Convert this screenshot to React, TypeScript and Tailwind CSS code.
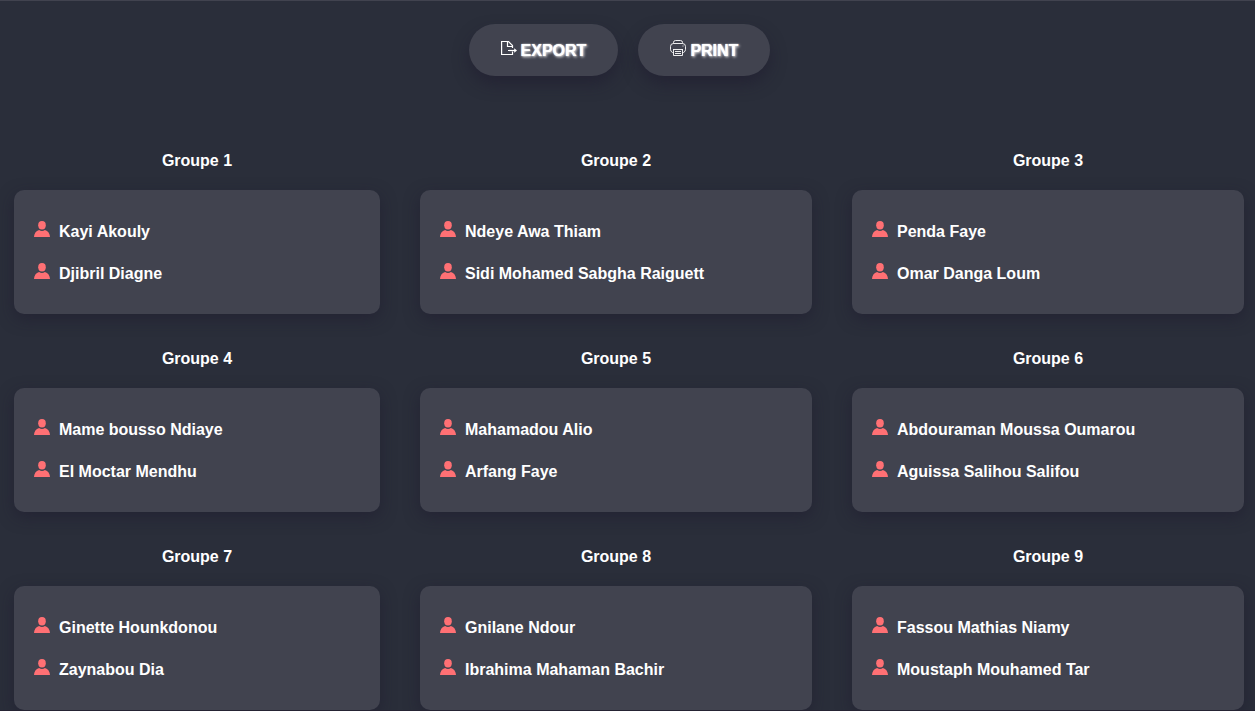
import React from "react";

type Group = { title: string; members: string[] };

const groups: Group[] = [
  { title: "Groupe 1", members: ["Kayi Akouly", "Djibril Diagne"] },
  { title: "Groupe 2", members: ["Ndeye Awa Thiam", "Sidi Mohamed Sabgha Raiguett"] },
  { title: "Groupe 3", members: ["Penda Faye", "Omar Danga Loum"] },
  { title: "Groupe 4", members: ["Mame bousso Ndiaye", "El Moctar Mendhu"] },
  { title: "Groupe 5", members: ["Mahamadou Alio", "Arfang Faye"] },
  { title: "Groupe 6", members: ["Abdouraman Moussa Oumarou", "Aguissa Salihou Salifou"] },
  { title: "Groupe 7", members: ["Ginette Hounkdonou", "Zaynabou Dia"] },
  { title: "Groupe 8", members: ["Gnilane Ndour", "Ibrahima Mahaman Bachir"] },
  { title: "Groupe 9", members: ["Fassou Mathias Niamy", "Moustaph Mouhamed Tar"] },
];

function PersonIcon() {
  return (
    <svg className="mb-1.5 size-4 shrink-0 text-[#ff7074]" viewBox="0 0 16 16" fill="currentColor" aria-hidden="true">
      <ellipse cx="8" cy="4.2" rx="3.8" ry="4.200" />
      <path d="M0 16c0-3.600 2-6 5.100-7.100C6 9.600 7 9.900 8 9.900s2-.3 2.900-1C14 10 16 12.400 16 16z" />
    </svg>
  );
}

function ExportIcon() {
  return (
    <svg className="mb-1.5 size-4 shrink-0" viewBox="0 0 16 16" fill="none" stroke="currentColor" strokeWidth="1.200" aria-hidden="true">
      <path d="M11.500 11.500V14.500H.6V1.500H7.500L11.500 5.500V8" />
      <path d="M6.500 1.500V6.500H11.500" />
      <path d="M7 10.500H14.500" />
      <path d="M13.200 8.200L16 10.500L13.200 12.800Z" fill="currentColor" stroke="none" />
    </svg>
  );
}

function PrintIcon() {
  return (
    <svg className="mb-1.5 size-4 shrink-0" viewBox="0 0 16 16" fill="none" stroke="currentColor" strokeWidth="0.9" aria-hidden="true">
      <path d="M3.500 3.500V2.500Q3.500.5 5.500.5H10.500Q12.500.5 12.500 2.500V3.500" />
      <path d="M3.500 12.500H2.500Q.5 11.500.5 9.500V6.500Q.5 3.500 3.500 3.500H12.500Q15.500 3.500 15.500 6.500V9.500Q15.500 11.500 13.500 12.500H12.500" />
      <path d="M3 9.500H13M3.500 9.500V15.500H12.500V9.500M5 11.500H11M5 13.500H11" />
      <path d="M12.500 6H13.500" />
    </svg>
  );
}

function ActionButton({ icon, children }: { icon: React.ReactNode; children: React.ReactNode }) {
  return (
    <button
      type="button"
      className="flex h-13 items-center gap-1 rounded-full bg-[#41434f] px-8 pt-0.5 font-bold uppercase shadow-[0_8px_15px_rgba(30,25,45,0.5)] [text-shadow:0_0_1px_white,1px_1px_3px_white]"
    >
      {icon}
      {children}
    </button>
  );
}

export default function App() {
  return (
    <div className="h-screen overflow-hidden border-t border-b border-t-[#41434f] border-b-[#252333] bg-[#2a2e3a] font-['Liberation_Sans',Arial,sans-serif] text-base text-white">
      <header className="mt-[23px] flex justify-center gap-5 pr-4">
        <ActionButton icon={<ExportIcon />}>Export</ActionButton>
        <ActionButton icon={<PrintIcon />}>Print</ActionButton>
      </header>
      <main className="mt-[73px] grid grid-cols-[366fr_392fr_392fr] gap-x-10 gap-y-[33px] pr-[11px] pl-[14px]">
        {groups.map((group) => (
          <section key={group.title}>
            <h2 className="mb-[17px] text-center leading-6 font-bold">{group.title}</h2>
            <ul className="rounded-[10px] bg-[#41434f] p-5 shadow-[0_5px_15px_rgba(30,25,45,0.5)]">
              {group.members.map((name) => (
                <li key={name} className="flex h-[42px] items-center gap-[9px] pt-0.5 font-bold">
                  <PersonIcon />
                  {name}
                </li>
              ))}
            </ul>
          </section>
        ))}
      </main>
    </div>
  );
}
